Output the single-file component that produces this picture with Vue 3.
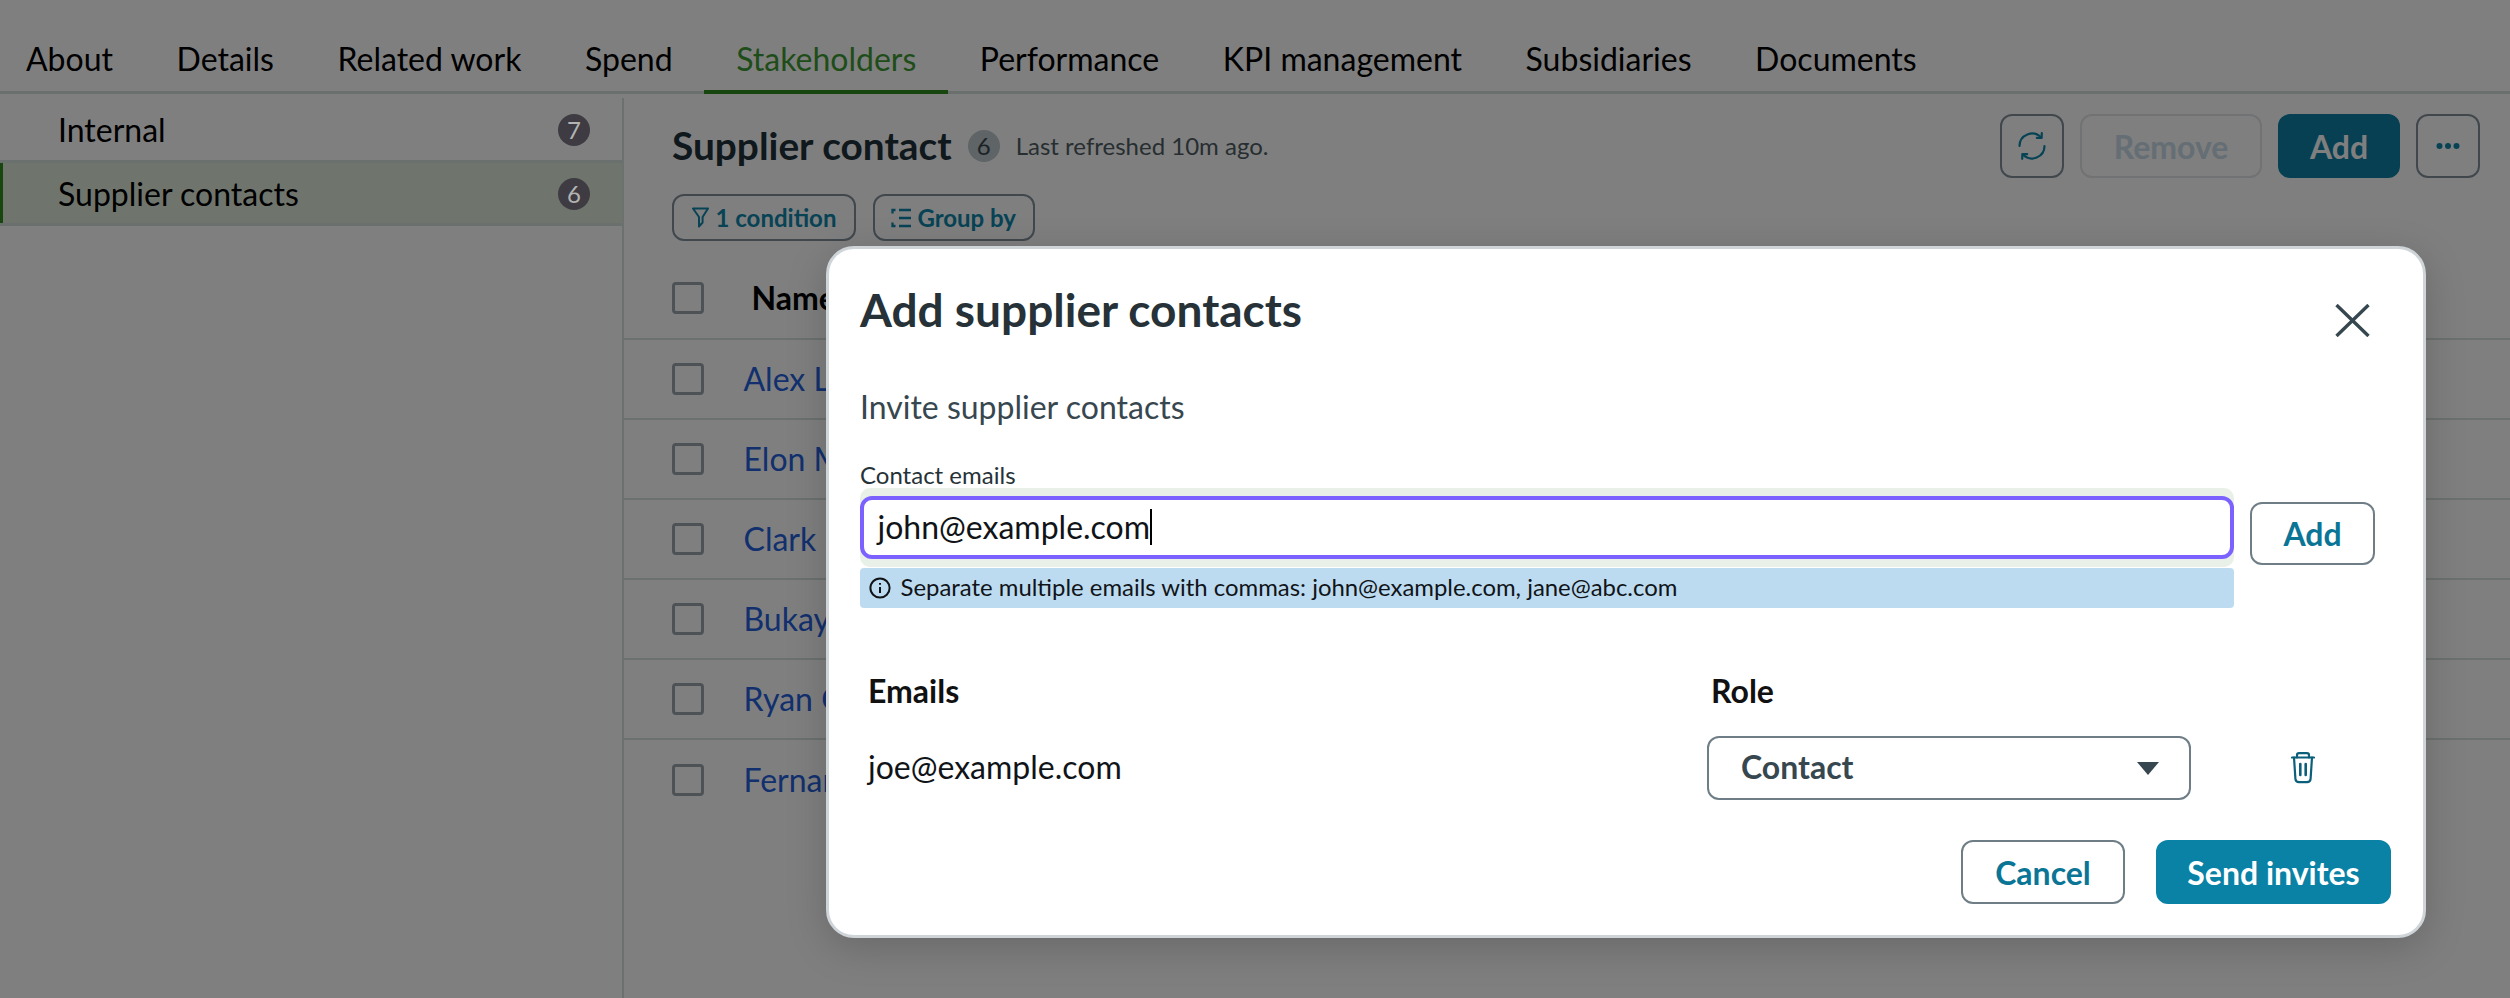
<script setup>
const tabs = ['About', 'Details', 'Related work', 'Spend', 'Stakeholders', 'Performance', 'KPI management', 'Subsidiaries', 'Documents']
const sections = [
  { name: 'Internal', count: 7, active: false },
  { name: 'Supplier contacts', count: 6, active: true }
]
const people = ['Alex L', 'Elon M', 'Clark', 'Bukayo', 'Ryan G', 'Fernan']
</script>

<template>
  <div class="page">
    <nav class="tabs">
      <div v-for="t in tabs" :key="t" class="tab" :class="{ on: t === 'Stakeholders' }">{{ t }}</div>
    </nav>
    <div class="body">
      <aside class="side">
        <div v-for="s in sections" :key="s.name" class="side-row" :class="{ on: s.active }">
          <span>{{ s.name }}</span>
          <span class="count">{{ s.count }}</span>
        </div>
      </aside>
      <main class="main">
        <div class="toolbar">
          <h2 class="heading">Supplier contact</h2>
          <span class="count-soft">6</span>
          <span class="refreshed">Last refreshed 10m ago.</span>
          <div class="actions">
            <button class="btn square">
              <svg width="28" height="28" viewBox="0 0 28 28" fill="none" stroke="#0e86aa" stroke-width="2.2" stroke-linecap="round" stroke-linejoin="round">
                <path d="M1.5 14A12.5 12.5 0 0 1 23 5.4" />
                <path d="M26.5 14A12.5 12.5 0 0 1 5 22.6" />
                <path d="M23.8 1.2 23.6 6 18.8 5.8" />
                <path d="M4.2 26.8 4.4 22 9.2 22.2" />
              </svg>
            </button>
            <button class="btn disabled">Remove</button>
            <button class="btn primary">Add</button>
            <button class="btn square">
              <svg width="24" height="8" viewBox="0 0 24 8" fill="#0e86aa">
                <circle cx="3.5" cy="4" r="3" /><circle cx="12" cy="4" r="3" /><circle cx="20.5" cy="4" r="3" />
              </svg>
            </button>
          </div>
        </div>
        <div class="filters">
          <button class="chip">
            <svg width="17" height="21" viewBox="0 0 17 21" fill="none" stroke="currentColor" stroke-width="2" stroke-linejoin="round">
              <path d="M1 1.5h15L10.6 10v5.5L7 19.5V10z" />
            </svg>
            1 condition
          </button>
          <button class="chip group">
            <svg width="20" height="20" viewBox="0 0 20 20" fill="none" stroke="currentColor" stroke-width="2.3">
              <path d="M8 2h12M8 10h12M8 18h12" />
              <path d="M4.5 2H1.5v3.5M4.5 18H1.5v-3.5" />
            </svg>
            Group by
          </button>
        </div>
        <div class="table">
          <div class="row head">
            <span class="check"></span>
            <span class="name-head">Name</span>
          </div>
          <div v-for="p in people" :key="p" class="row">
            <span class="check"></span>
            <a class="person">{{ p }}</a>
          </div>
        </div>
      </main>
    </div>

    <div class="scrim"></div>

    <section class="modal">
      <header class="modal-head">
        <h1 class="title">Add supplier contacts</h1>
        <svg class="close" width="35" height="33" viewBox="0 0 35 33" fill="none" stroke="#37474f" stroke-width="3.4">
          <path d="M1.5 1 33.5 32M33.5 1 1.5 32" />
        </svg>
      </header>
      <p class="sub">Invite supplier contacts</p>
      <div class="label">Contact emails</div>
      <div class="email-row">
        <div class="email-col">
          <div class="focus-wrap">
            <div class="input">john@example.com<i class="caret"></i></div>
          </div>
          <div class="hint">
            <svg width="22" height="22" viewBox="0 0 22 22" fill="none" stroke="#101418" stroke-width="2">
              <circle cx="11" cy="11" r="9.6" />
              <path d="M11 10v6" />
              <path d="M11 6v1.8" />
            </svg>
            <span>Separate multiple emails with commas: john@example.com, jane@abc.com</span>
          </div>
        </div>
        <button class="btn outline add">Add</button>
      </div>

      <div class="grid">
        <div class="col-email-head">Emails</div>
        <div class="col-role-head">Role</div>
        <div></div>
        <div class="email">joe@example.com</div>
        <div class="select">
          <span>Contact</span>
          <i class="tri"></i>
        </div>
        <svg class="trash" width="24" height="32" viewBox="0 0 24 32" fill="none" stroke="#0b5f7a" stroke-width="2.2" stroke-linecap="round" stroke-linejoin="round">
          <path d="M1 5.5h22" />
          <path d="M6 5.5V3.2A2 2 0 0 1 8 1.2h8a2 2 0 0 1 2 2v2.3" />
          <path d="M3 5.5l1.4 21.2a3.6 3.6 0 0 0 3.6 3.4h8a3.6 3.6 0 0 0 3.6-3.4L21 5.5" />
          <path d="M9.3 12v11M14.7 12v11" stroke-width="2.6" />
        </svg>
      </div>

      <footer class="foot">
        <button class="btn outline cancel">Cancel</button>
        <button class="btn send">Send invites</button>
      </footer>
    </section>
  </div>
</template>

<style scoped>
.page {
  position: relative;
  width: 2510px;
  height: 998px;
  overflow: hidden;
  background: #fff;
  font-family: Lato, "Open Sans", sans-serif;
  color: #000;
}
.tabs {
  display: flex;
  height: 94px;
  box-sizing: border-box;
  border-bottom: 3px solid #d4e0dc;
  padding-left: 26px;
}
.tab {
  padding: 0 31.8px;
  height: 91px;
  box-sizing: border-box;
  font-size: 32px;
  line-height: 118px;
  white-space: nowrap;
}
.tab:first-child { padding-left: 0; }
.tab.on {
  color: #3f9a35;
  box-shadow: 0 3px 0 #2f8f1f, inset 0 -1px 0 #2f8f1f;
}
.body { display: flex; height: 904px; }
.side {
  width: 624px;
  box-sizing: border-box;
  border-right: 2px solid #d6e2de;
  margin-top: 4px;
  flex: none;
}
.side-row {
  height: 62px;
  box-sizing: border-box;
  display: flex;
  align-items: center;
  justify-content: space-between;
  padding: 0 32px 0 58px;
  font-size: 32px;
}
.side-row.on {
  background: #dfeadb;
  border-top: 3px solid #d4e0dc;
  border-bottom: 3px solid #d4e0dc;
  box-shadow: inset 3px 0 0 #2f8f1f;
  height: 66px;
}
.count {
  position: relative;
  z-index: 1;
  width: 32px;
  height: 32px;
  margin-top: 2px;
  border-radius: 50%;
  background: #3e3c42;
  color: #b4b4b4;
  font-size: 24px;
  line-height: 32px;
  text-align: center;
}
.main { flex: 1; padding-top: 20px; min-width: 0; }
.toolbar {
  display: flex;
  align-items: center;
  height: 64px;
  padding: 0 30px 0 48px;
}
.heading {
  margin: 0;
  padding-bottom: 2px;
  font-size: 38.8px;
  font-weight: 700;
  color: #1f3038;
  white-space: nowrap;
}
.count-soft {
  width: 32px;
  height: 32px;
  margin-left: 16px;
  border-radius: 50%;
  background: #bec8cc;
  color: #37474f;
  font-size: 24px;
  line-height: 32px;
  text-align: center;
}
.refreshed { margin-left: 16px; padding-bottom: 2px; font-size: 24px; color: #4f5c63; }
.actions { margin-left: auto; display: flex; gap: 16px; }
.btn {
  height: 64px;
  box-sizing: border-box;
  border-radius: 12px;
  font-family: inherit;
  font-size: 32px;
  font-weight: 700;
  display: flex;
  align-items: center;
  justify-content: center;
  padding: 0;
  background: #fff;
  border: 2.5px solid #82909a;
  color: #0e86aa;
}
.square { width: 64px; }
.disabled { width: 182px; border-color: #e2e4e6; color: #c8dce8; }
.primary { width: 122px; background: #0e80a6; border-color: #0e80a6; color: #fff; }
.filters { display: flex; gap: 17px; margin-top: 16px; padding-left: 48px; }
.chip {
  height: 47px;
  box-sizing: border-box;
  display: flex;
  align-items: center;
  gap: 7px;
  padding: 0 17.5px;
  background: #fff;
  border: 2.5px solid #82909a;
  border-radius: 12px;
  font-family: inherit;
  font-size: 24px;
  font-weight: 700;
  color: #0e86aa;
  white-space: nowrap;
}
.chip.group { padding: 0 16.5px; gap: 6px; }
.table { margin-top: 19px; }
.row {
  height: 80px;
  box-sizing: border-box;
  display: flex;
  align-items: center;
  padding-left: 48px;
  border-bottom: 2px solid #d6e2de;
}
.row.head { padding-bottom: 3px; }
.row:last-child { border-bottom: 0; }
.check {
  width: 32px;
  height: 32px;
  box-sizing: border-box;
  border: 3px solid #98a4ab;
  border-radius: 4px;
  background: #fff;
  flex: none;
}
.name-head { margin-left: 47.5px; font-size: 32px; font-weight: 700; }
.person {
  margin-left: 39.5px;
  padding-bottom: 2px;
  white-space: nowrap;
  font-size: 32px;
  color: #2560dc;
}
.scrim {
  position: absolute;
  inset: 0;
  background: rgba(0, 0, 0, 0.5);
}
.modal {
  position: absolute;
  z-index: 2;
  left: 826px;
  top: 246px;
  width: 1600px;
  height: 692px;
  box-sizing: border-box;
  padding: 0 32px 0 31px;
  background: #fff;
  border: 3px solid #ced4d7;
  border-radius: 28px;
  box-shadow: 0 10px 40px rgba(0, 0, 0, 0.18);
  overflow: hidden;
}
.modal-head {
  display: flex;
  align-items: flex-start;
  justify-content: space-between;
  padding-top: 32px;
}
.title {
  margin: 0;
  font-size: 46px;
  line-height: 58px;
  font-weight: 700;
  color: #263238;
}
.close { margin: 23px 21px 0 0; }
.sub {
  margin: 48px 0 0;
  font-size: 32px;
  line-height: 40px;
  color: #37474f;
}
.label {
  margin-top: 35px;
  font-size: 24px;
  line-height: 26px;
  color: #263238;
}
.email-row { display: flex; gap: 16px; align-items: flex-start; }
.email-col { width: 1374px; }
.focus-wrap {
  background: #e9f0e7;
  border-radius: 10px;
  padding: 8px 0;
}
.input {
  height: 63px;
  box-sizing: border-box;
  border: 4px solid #7b61ff;
  border-radius: 12px;
  background: #fff;
  padding: 0 0 2px 13.5px;
  font-size: 32px;
  color: #101418;
  display: flex;
  align-items: center;
}
.caret {
  display: block;
  width: 2px;
  height: 36px;
  margin-left: 0;
  background: #000;
}
.hint {
  margin-top: 1px;
  height: 40px;
  display: flex;
  align-items: center;
  gap: 9.5px;
  padding-left: 9px;
  background: #bddbf0;
  border-radius: 4px;
  font-size: 23.9px;
  color: #101418;
}
.hint span { padding-bottom: 3px; }
.add { width: 125px; height: 63px; margin-top: 14px; color: #0b7596; border-color: #6f7e86; }
.grid {
  margin-top: 63px;
  display: grid;
  grid-template-columns: 839px 484px auto;
  padding-left: 8px;
  row-gap: 25px;
  align-items: center;
}
.col-email-head { font-size: 32px; font-weight: 700; line-height: 40px; color: #111; }
.col-role-head { font-size: 32px; font-weight: 700; line-height: 40px; color: #111; padding-left: 4px; }
.email { padding-bottom: 3px; font-size: 32px; color: #101418; }
.select {
  height: 64px;
  box-sizing: border-box;
  border: 2.5px solid #6f7e86;
  border-radius: 12px;
  display: flex;
  align-items: center;
  justify-content: space-between;
  padding: 0 30px 0 32px;
  font-size: 32px;
  font-weight: 700;
  color: #37474f;
}
.select span { padding-bottom: 3px; }
.tri {
  width: 0;
  height: 0;
  border-left: 11px solid transparent;
  border-right: 11px solid transparent;
  border-top: 13px solid #37474f;
}
.trash { margin-left: 100px; }
.foot { display: flex; justify-content: flex-end; gap: 31px; margin-top: 40px; }
.cancel { width: 164px; color: #0b7596; border-color: #6f7e86; }
.send { width: 235px; background: #0a82a6; border-color: #0a82a6; color: #fff; }
</style>
